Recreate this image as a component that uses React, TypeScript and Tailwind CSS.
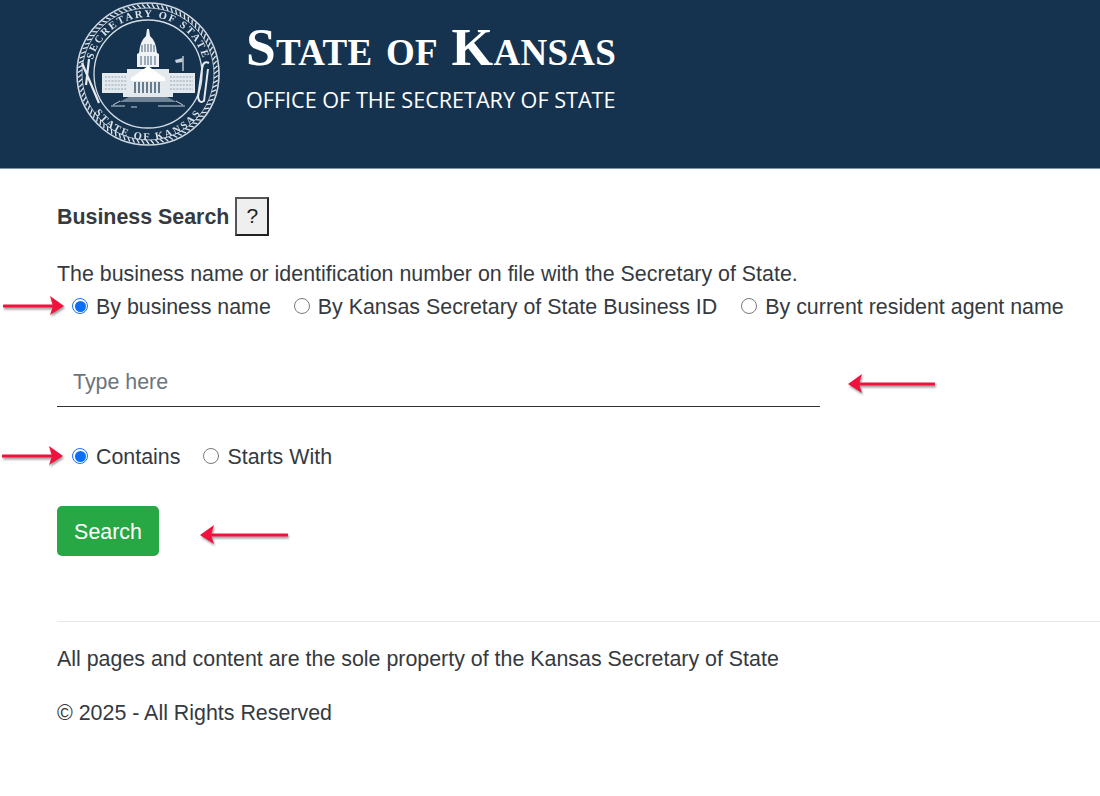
import React from 'react';

const Seal: React.FC = () => {
  const rope = Array.from({ length: 90 }, (_, i) => i * 4);
  return (
    <svg width="146" height="146" viewBox="0 0 146 146" className="shrink-0 mt-[1px] blur-[0.35px]" fill="none">
      <defs>
        <path id="sealTop" d="M 16 73 A 57 57 0 0 1 130 73" />
        <path id="sealBottom" d="M 7 73 A 66 66 0 0 0 139 73" />
      </defs>
      <circle cx="73" cy="73" r="71" stroke="#cfd8e0" strokeWidth="1.6" />
      <circle cx="73" cy="73" r="54" stroke="#d5dde4" strokeWidth="1.3" />
      <circle cx="73" cy="73" r="66" stroke="#aebcc8" strokeWidth="1" />
      {rope.map(a => (
        <line key={a} x1="72" y1="3" x2="75" y2="7" stroke="#dfe5ea" strokeWidth="1.3" transform={`rotate(${a} 73 73)`} />
      ))}
      <text fontFamily="'Liberation Serif', serif" fontWeight="700" fontSize="10.5" letterSpacing="1.9" fill="#dde3e9">
        <textPath href="#sealTop" startOffset="50%" textAnchor="middle">SECRETARY OF STATE</textPath>
      </text>
      <text fontFamily="'Liberation Serif', serif" fontWeight="700" fontSize="10.5" letterSpacing="2" fill="#dde3e9">
        <textPath href="#sealBottom" startOffset="50%" textAnchor="middle">STATE OF KANSAS</textPath>
      </text>
      {/* capitol */}
      <path d="M72 28 L74 28 L75 35 Q81 40 82 52 L84 53 V66 H62 V53 L64 52 Q65 40 71 35 Z" fill="#f0f3f5" />
      <path d="M67 44 V51 M70 43 V51 M73 43 V51 M76 43 V51 M79 44 V51 M66 55 V64 M70 55 V64 M73 55 V64 M76 55 V64 M80 55 V64" stroke="#5b7288" strokeWidth="1.1" />
      <path d="M27 72 H52 V68 H94 V72 H120 V92 H98 V96 H48 V92 H27 Z" fill="#e4e9ed" />
      <path d="M56 77 L73 65 L90 77 Z" fill="#ffffff" />
      <path d="M56 77 H90 V80 H56 Z" fill="#ffffff" />
      <path d="M30 76 H52 M30 80 H52 M30 84 H52 M30 88 H52 M95 76 H118 M95 80 H118 M95 84 H118 M95 88 H118" stroke="#7f94a7" strokeWidth="0.8" strokeDasharray="2 1.2" />
      <path d="M60 81 V92 M64 81 V92 M68 81 V92 M72 81 V92 M76 81 V92 M80 81 V92 M84 81 V92" stroke="#26445f" strokeWidth="1.3" />
      <path d="M54 96 H92 L102 101 H44 Z" fill="#6e8396" />
      <path d="M36 105 H50 M56 106 H62 M83 105 H110 M45 100 L38 104 M101 100 L108 104" stroke="#c4ced7" strokeWidth="1" />
      <path d="M108 70 V55" stroke="#e6ebef" strokeWidth="1.2" />
      <path d="M107.5 57 L100 59 L101 62 L107.5 61 Z" fill="#c7d1da" />
      {/* side ornaments */}
      <path d="M7 62 L24 102 M14 58 L11 84" stroke="#e6ebef" strokeWidth="2.2" />
      <path d="M134 62 Q128 59 127 68 L123 96 Q124 103 129 100 L133 68" stroke="#e6ebef" strokeWidth="2" />
    </svg>
  );
};

const Radio: React.FC<{ checked?: boolean }> = ({ checked }) => (
  checked ? (
    <span className="w-[16px] h-[16px] -mt-[2px] rounded-full border border-[#1a73f0] bg-white flex items-center justify-center shrink-0">
      <span className="w-[11px] h-[11px] rounded-full bg-[#0b6ef6]"></span>
    </span>
  ) : (
    <span className="w-[16px] h-[16px] -mt-[2px] rounded-full border border-[#7a7a7a] bg-white shrink-0"></span>
  )
);

const Option: React.FC<{ label: string; checked?: boolean; className?: string }> = ({ label, checked, className }) => (
  <label className={`flex items-center gap-[8px] ${className ?? ''}`}>
    <Radio checked={checked} />
    <span>{label}</span>
  </label>
);

// left or right pointing red annotation arrow
const Arrow: React.FC<{ flip?: boolean; width: number; className: string }> = ({ flip, width, className }) => (
  <svg
    width={width}
    height="24"
    viewBox={`0 0 ${width} 24`}
    className={`absolute drop-shadow-[1px_2px_1px_rgba(0,0,0,0.4)] ${className}`}
    fill="none"
  >
    <g transform={flip ? `translate(${width} 0) scale(-1 1)` : undefined}>
      <line x1="1" y1="12" x2={width - 12} y2="12" stroke="#f0123c" strokeWidth="3" strokeLinecap="round" />
      <path d={`M${width - 15} 2 L${width - 1} 12 L${width - 15} 21 L${width - 12} 12 Z`} fill="#f0123c" />
    </g>
  </svg>
);

export default function App() {
  return (
    <div className="relative min-h-[796px] bg-white text-[#343a40] font-['Liberation_Sans',Arial,sans-serif] text-[21.4px] overflow-hidden">
      {/* Header */}
      <header className="h-[169px] bg-[#15334f] border-b border-[#7f93a6] flex items-start pl-[75px]">
        <Seal />
        <div className="ml-[25px] text-white">
          <h1 className="mt-[17px] font-['Liberation_Serif',serif] font-bold text-[53.5px] tracking-[0.27px] leading-[60px] [font-variant:small-caps] whitespace-nowrap">State of Kansas</h1>
          <p className="mt-[7px] font-['Open_Sans',sans-serif] font-medium text-[21.6px] leading-[32px] whitespace-nowrap">OFFICE OF THE SECRETARY OF STATE</p>
        </div>
      </header>

      {/* Search form */}
      <main className="pl-[57px]">
        <div className="flex items-center gap-[6px] mt-[27px] h-[40px]">
          <span className="font-bold pt-[3px]">Business Search</span>
          <button className="w-[34px] h-[39px] border-2 border-t-[#555] border-l-[#555] border-r-[#222] border-b-[#222] bg-[#efefef] text-[#222] text-[21px] flex items-center justify-center">?</button>
        </div>

        <p className="mt-[23px] leading-[30px] h-[30px] whitespace-nowrap">The business name or identification number on file with the Secretary of State.</p>

        <div className="flex items-center mt-[2px] h-[32px] pl-[15px] whitespace-nowrap">
          <Option label="By business name" checked />
          <Option label="By Kansas Secretary of State Business ID" className="ml-[23px]" />
          <Option label="By current resident agent name" className="ml-[24px]" />
        </div>

        <div className="w-[763px] h-[52px] mt-[32px] pt-[4px] border-b border-[#333] flex items-center pl-[16px] text-[#6c757d]">
          Type here
        </div>

        <div className="flex items-center mt-[34px] h-[32px] pl-[15px] whitespace-nowrap">
          <Option label="Contains" checked />
          <Option label="Starts With" className="ml-[23px]" />
        </div>

        <button className="mt-[33px] w-[102px] h-[50px] pt-[2px] rounded-[5px] bg-[#28a745] text-white flex items-center justify-center">Search</button>

        <div className="mt-[65px] border-t border-[#e5e7e9] pt-[22px]">
          <p className="leading-[30px]">All pages and content are the sole property of the Kansas Secretary of State</p>
          <p className="leading-[30px] mt-[24px]">© 2025 - All Rights Reserved</p>
        </div>
      </main>

      {/* Annotation arrows */}
      <Arrow width={62} className="left-[3px] top-[294px]" />
      <Arrow width={88} flip className="left-[847px] top-[372px]" />
      <Arrow width={62} className="left-[2px] top-[444px]" />
      <Arrow width={89} flip className="left-[199px] top-[523px]" />
    </div>
  );
}
